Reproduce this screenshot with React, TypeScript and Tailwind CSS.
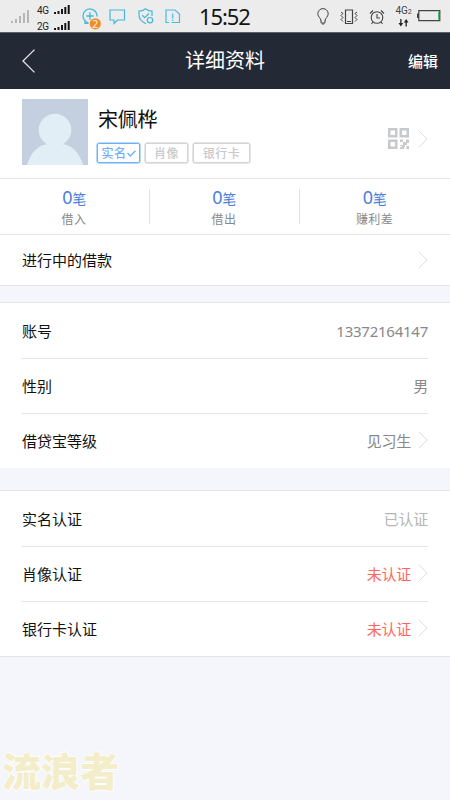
import type { ReactNode } from "react";

type RowProps = {
  label: string;
  value: string;
  valueClass?: string;
  arrow?: boolean;
  last?: boolean;
};

function Arrow() {
  return (
    <svg className="h-[18px] w-[10px] shrink-0" viewBox="0 0 10 18" fill="none" stroke="#dfdfe1">
      <path d="M.7.7 9.2 9 .7 17.3" />
    </svg>
  );
}

function Row({ label, value, valueClass = "text-[#888]", arrow, last }: RowProps) {
  return (
    <div
      className={`mx-[22px] flex items-center justify-between ${
        last ? "h-[54px]" : "h-[55px] border-b border-[#e5e5e7]"
      }`}
    >
      <span className="text-[#111]">{label}</span>
      <span className={`flex items-center tracking-[-0.25px] ${valueClass}`}>
        {value}
        {arrow ? (
          <span className="mb-[2px] ml-[7px]">
            <Arrow />
          </span>
        ) : null}
      </span>
    </div>
  );
}

function Stat({ label, divider }: { label: string; divider?: boolean }) {
  return (
    <div className="flex h-[55px] flex-1 items-center">
      <div className="flex-1 pt-[2px] pr-px text-center">
        <div className="h-[22px] leading-[20px] tracking-[-0.3px] text-[#4a7fdc]">
          <span className="text-[18px]">0</span>
          <span className="text-[14px]">笔</span>
        </div>
        <div className="mt-px h-[18px] text-[12px] leading-[20px] tracking-[0.4px] text-[#888]">{label}</div>
      </div>
      {divider ? <div className="h-[35px] w-px bg-[#e2e2e4]" /> : null}
    </div>
  );
}

function Tag({ className, children }: { className: string; children: ReactNode }) {
  return (
    <span
      className={`flex h-5 items-center justify-center rounded-[2px] border pt-px text-[12px] leading-none font-medium tracking-[0.5px] shadow-[0_0_0_0.5px_currentColor] ${className}`}
    >
      {children}
    </span>
  );
}

function Bars() {
  return (
    <svg className="h-[9px] w-[16px]" viewBox="0 0 16 9" fill="#151515">
      <path d="M0 7h2v2H0zM3.5 6h2v3h-2zM7 4h2v5H7zM10.3 2h2v7h-2zM13.7 0h2v9h-2z" />
    </svg>
  );
}

function StatusBar() {
  return (
    <div className="flex h-[33px] items-center border-b border-[#59606b] bg-[#ececec] pt-px">
      <svg className="ml-[10px] h-[14px] w-[20px]" viewBox="0 0 20 14" fill="#b5b5b5">
        <path d="M1 11h2v2H1zM5 9h2v4H5zM9 6h2v7H9zM13 3h2v10h-2zM17 0h2v13h-2z" />
      </svg>
      <div className="mt-[4px] ml-[7px] flex w-[17px] flex-col font-['Roboto',sans-serif] text-[10px] leading-[16px] tracking-[-0.4px] text-[#222]">
        <span>4G</span>
        <span>2G</span>
      </div>
      <div className="mt-[2px] flex w-[16px] flex-col gap-[7px]">
        <Bars />
        <Bars />
      </div>
      <svg className="mb-[2px] ml-[12px] h-[22px] w-[20px] self-end" viewBox="0 0 20 22" fill="none" stroke="#43b9da">
        <path d="M6.500 14.800A7 7 0 1 1 15 8.500M3 13v2.300h3.500M4.300 8h7.400M8 4.300v7.400" strokeWidth="1.3" />
        <circle cx="13.300" cy="15.800" r="5.600" fill="#f68b1f" stroke="none" />
        <text
          x="13.300"
          y="19.600"
          textAnchor="middle"
          fontSize="10.500"
          fill="#fff"
          stroke="none"
          fontFamily="Open Sans, sans-serif"
        >
          2
        </text>
      </svg>
      <svg className="ml-[7px] h-[16px] w-[17px]" viewBox="0 0 17 16" fill="none" stroke="#43b9da" strokeWidth="1.200">
        <path d="M1 1h14.500v10H8.500L5 14.500V11H1z" />
      </svg>
      <svg className="ml-[12px] h-[17px] w-[16px]" viewBox="0 0 16 17" fill="none" stroke="#43b9da" strokeWidth="1.200">
        <path d="M8 15.800C3 13.500 1 11 1 7V3.200Q4.500 3.200 7.500.8q3 2.400 6.500 2.400V8" />
        <path d="m4.300 7.300 2.500 2.400 4.200-4.200" />
        <circle cx="12" cy="12.200" r="2.700" />
      </svg>
      <svg className="ml-[11px] h-[15px] w-[16px]" viewBox="0 0 16 15" fill="none" stroke="#43bde3" strokeWidth="1.200">
        <path d="M4 13.500H1V1h9l4.500 4v8.500H6.500M7.700 4.500v5M7.700 10.500v1.500" />
      </svg>
      <span className="-mt-[2px] ml-[18px] w-[54px] font-['Noto_Sans',sans-serif] text-[22px] leading-[32px] tracking-[-1.1px] text-[#151515]">
        15:52
      </span>
      <svg className="ml-[64px] h-[17px] w-[12px]" viewBox="0 0 12 17" fill="none" stroke="#444">
        <path d="M4 13C4 10 .8 9 .8 5.800a5.200 5.200 0 0 1 10.400 0C11.200 9 8 10 8 13M4 12.500v2.500h4v-2.500M5 16h2" />
      </svg>
      <svg className="ml-[11px] h-[16px] w-[18px]" viewBox="0 0 18 16" fill="none" stroke="#444">
        <path d="M5.500 1h7v13.500h-7zM7 12.500h4" strokeWidth="1.200" />
        <path d="m1 3 2 1.500-2 2 2 2-2 2 2 2M17 3l-2 1.500 2 2-2 2 2 2-2 2" />
      </svg>
      <svg className="ml-[11px] h-[16px] w-[16px]" viewBox="0 0 16 16" fill="none" stroke="#444" strokeWidth="1.100">
        <circle cx="8" cy="8.500" r="5.800" />
        <path d="M8 5v4h3M1 4.500 4 1.500M12 1.500l3 3M4 13l-1.500 2M12 13l1.500 2" />
      </svg>
      <div className="ml-[10px] flex h-[25px] w-[17px] flex-col items-center font-['Roboto',sans-serif] text-[10px] leading-[14px] tracking-[-0.2px] text-[#444]">
        <span className="whitespace-nowrap">
          4G<span className="text-[7px]">2</span>
        </span>
        <svg className="h-[8px] w-[11px] shrink-0" viewBox="0 0 11 8" fill="#222">
          <path d="M2.200 0h1.300v4h1.700L2.850 7.500.5 4h1.700zM7.500 7.500h1.300v-4h1.700L8.150 0 5.800 3.500h1.700z" />
        </svg>
      </div>
      <svg className="mb-px ml-[5px] h-[12px] w-[24px]" viewBox="0 0 24 12" fill="none" stroke="#444">
        <path d="M1.800.7h21v10h-21zM.6 3.500v4.500" strokeWidth="1.200" />
        <path d="M21.500 2v7.500" stroke="#43ba76" />
      </svg>
    </div>
  );
}

function QrIcon() {
  return (
    <svg className="-mt-[2px] h-[21px] w-[21px]" viewBox="0 0 21 21" fill="#c8c9cb">
      <path
        fillRule="evenodd"
        d="M0 0h9.500v9.500H0zM2.500 2.500V7H7V2.500zM11.500 0H21v9.500h-9.500zM14 2.500V7h4.500V2.500zM0 11.500h9.500V21H0zM2.500 14v4.500H7V14z"
      />
      <path d="M12 11.500h3V14h-3zM18 11.500h3V15h-2v2h-2v-2.500h1zM15 14h2v2h-2zM12 17h3v-1h2v3h-1v2h-4v-2h2v-1h-2zM18.500 18H21v3h-2.500z" />
    </svg>
  );
}

export default function App() {
  return (
    <div className="relative h-[800px] w-[450px] overflow-hidden bg-[#f4f6fb] font-['Noto_Sans','Noto_Sans_CJK_SC',sans-serif] text-[15px]">
      <StatusBar />

      <header className="flex h-[56px] items-center bg-[#232a36] pr-[11px] pl-[22px] text-white">
        <svg className="h-[24px] w-[13px]" viewBox="0 0 13 24" fill="none" stroke="#e8e8ea" strokeWidth="1.300">
          <path d="M12.500.6 1 12l11.500 11.400" />
        </svg>
        <h1 className="ml-[7px] flex-1 text-center text-[20px] leading-[28px]">详细资料</h1>
        <span className="w-[31px] text-[15px] font-medium">编辑</span>
      </header>

      <section className="border-b border-[#e5e5e7] bg-white">
        <div className="flex h-[90px] items-center border-b border-[#e5e5e7] px-[22px] pb-[4px]">
          <svg className="h-[66px] w-[66px] shrink-0" viewBox="0 0 66 66">
            <path fill="#c4d0e0" d="M0 0h66v66H0z" />
            <circle cx="33" cy="31" r="16.300" fill="#e2eef5" />
            <path fill="#e2eef5" d="M5 66c3-12 12-21 22-21h12c10 0 19 9 22 21z" />
          </svg>
          <div className="ml-[9px] flex-1 pt-[6px]">
            <div className="ml-px text-[20px] leading-[28px] tracking-[-0.3px] text-[#111]">宋佩桦</div>
            <div className="mt-[9px] flex gap-[5px]">
              <Tag className="w-[43px] border-[#71aff8] text-[#71aff8]">
                实名
                <svg className="h-[7px] w-[9px]" viewBox="0 0 9 7" fill="none" stroke="currentColor" strokeWidth="1.300">
                  <path d="m.5 3 2.800 3L8.500.7" />
                </svg>
              </Tag>
              <Tag className="w-[43px] border-[#d5d5d7] text-[#c9c9cb]">肖像</Tag>
              <Tag className="w-[57px] border-[#d5d5d7] text-[#c9c9cb]">银行卡</Tag>
            </div>
          </div>
          <div className="mt-[15px] flex items-center gap-[9px]">
            <QrIcon />
            <Arrow />
          </div>
        </div>
        <div className="flex border-b border-[#e5e5e7]">
          <Stat label="借入" divider />
          <Stat label="借出" divider />
          <Stat label="赚利差" />
        </div>
        <div className="flex h-[50px] items-center justify-between px-[22px]">
          <span className="text-[#111]">进行中的借款</span>
          <Arrow />
        </div>
      </section>

      <section className="mt-[16px] border-t border-[#e5e5e7] bg-white pt-px">
        <Row label="账号" value="13372164147" />
        <Row label="性别" value="男" />
        <Row label="借贷宝等级" value="见习生" arrow last />
      </section>

      <section className="mt-[22px] border-y border-[#e5e5e7] bg-white pt-px">
        <Row label="实名认证" value="已认证" valueClass="text-[#b5b5b5]" />
        <Row label="肖像认证" value="未认证" valueClass="text-[#ff665c]" arrow />
        <Row label="银行卡认证" value="未认证" valueClass="text-[#ff665c]" arrow last />
      </section>

      {/* watermark floats over the page background */}
      <div className="absolute bottom-[5px] left-[2px] text-[39px] leading-[48px] font-black text-[#f3edca] [paint-order:stroke_fill] [-webkit-text-stroke:2px_#fdfdfb]">
        流浪者
      </div>
    </div>
  );
}
